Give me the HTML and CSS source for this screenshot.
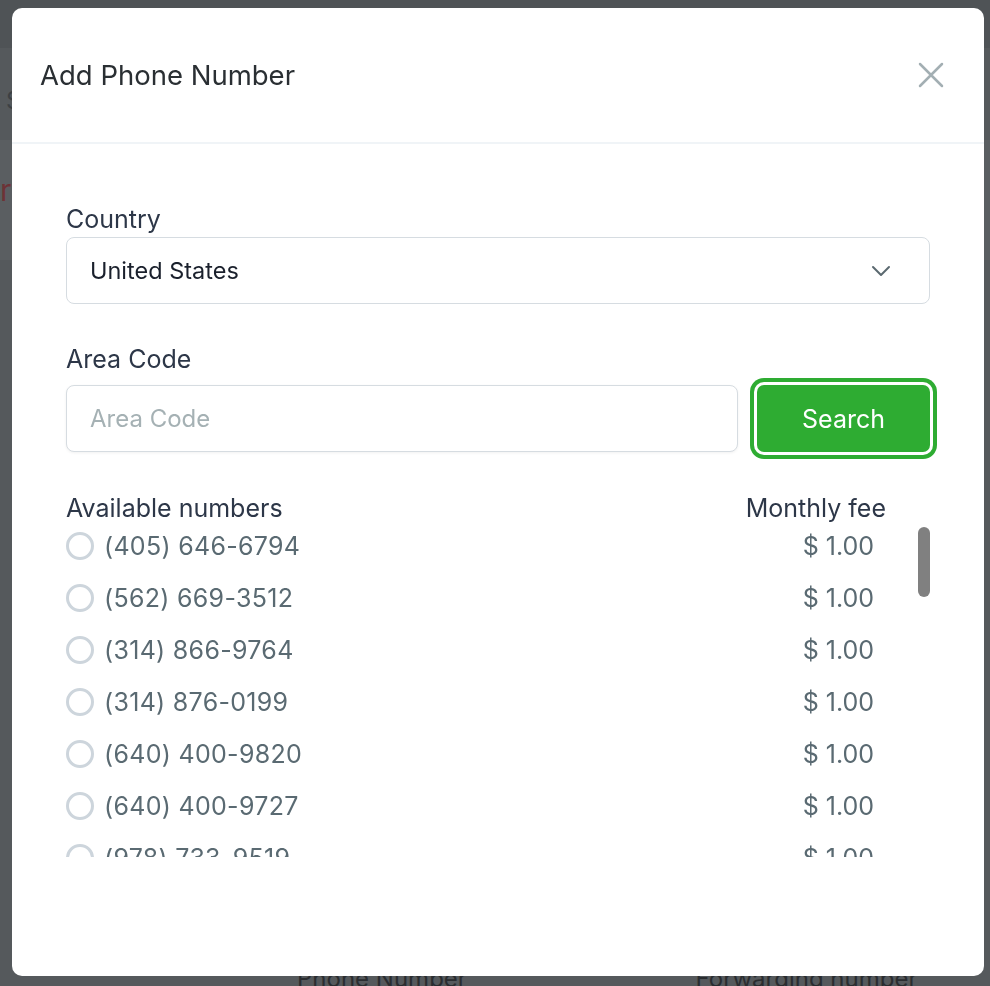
FILE: index.html
```html
<!DOCTYPE html>
<html lang="en">
<head>
	<meta charset="UTF-8">
	<title>Add Phone Number</title>
	<link rel="stylesheet" href="styles.css">
</head>
<body>
	<section class="page">
		<div class="page_top"></div>
		<div class="page_head"><span class="page_s">S</span></div>
		<div class="page_alert"><span class="page_r">r</span></div>
		<div class="page_main"></div>
		<div class="page_cols">
			<span class="col_phone">Phone Number</span>
			<span class="col_fwd">Forwarding number</span>
		</div>
	</section>

	<section class="modal">
		<header class="modal_head">
			<h1>Add Phone Number</h1>
			<button class="close" aria-label="Close">
				<svg width="26" height="26" viewBox="0 0 26 26"><path d="M2 2L24 24M24 2L2 24" stroke="#a3afb3" stroke-width="2.5" stroke-linecap="round"/></svg>
			</button>
		</header>
		<div class="modal_body">
			<label class="label label_country">Country</label>
			<div class="select">
				<span>United States</span>
				<svg width="20" height="12" viewBox="0 0 20 12"><path d="M2 2L10 10L18 2" fill="none" stroke="#5b6970" stroke-width="2" stroke-linecap="round" stroke-linejoin="round"/></svg>
			</div>

			<label class="label label_area">Area Code</label>
			<div class="search_row">
				<input class="area_input" type="text" placeholder="Area Code">
				<button class="search_btn">Search</button>
			</div>

			<div class="list_head">
				<span>Available numbers</span>
				<span>Monthly fee</span>
			</div>
			<div class="list_wrap">
				<ul class="list">
					<li><span class="radio"></span><span class="num">(405) 646-6794</span><span class="fee">$ 1.00</span></li>
					<li><span class="radio"></span><span class="num">(562) 669-3512</span><span class="fee">$ 1.00</span></li>
					<li><span class="radio"></span><span class="num">(314) 866-9764</span><span class="fee">$ 1.00</span></li>
					<li><span class="radio"></span><span class="num">(314) 876-0199</span><span class="fee">$ 1.00</span></li>
					<li><span class="radio"></span><span class="num">(640) 400-9820</span><span class="fee">$ 1.00</span></li>
					<li><span class="radio"></span><span class="num">(640) 400-9727</span><span class="fee">$ 1.00</span></li>
					<li><span class="radio"></span><span class="num">(978) 733-9519</span><span class="fee">$ 1.00</span></li>
					<li><span class="radio"></span><span class="num">(978) 733-9520</span><span class="fee">$ 1.00</span></li>
				</ul>
				<div class="thumb"></div>
			</div>
		</div>
	</section>
</body>
</html>
```

FILE: styles.css
```css
*{margin:0;padding:0;box-sizing:border-box}
li{list-style: none}
body{
	width: 990px;
	height: 986px;
	overflow: hidden;
	background: #54595c;
	font-family: Inter, "Liberation Sans", sans-serif;
}
.page{
	display: flex;
	flex-direction: column;
	height: 986px;
}
.page_top{
	height: 48px;
	background: #4f5356;
}
.page_head{
	height: 92px;
	background: #55595c;
	padding: 38px 0 0 6px;
	font-size: 24px;
	color: #3d4144;
}
.page_alert{
	height: 120px;
	background: #5a5e61;
	padding: 32px 0 0 0;
	font-size: 30px;
	color: #6e3236;
}
.page_main{
	flex: 1;
	background: #55595c;
}
.page_cols{
	height: 20px;
	background: #55595c;
	font-size: 24px;
	line-height: 22px;
	color: #2a2d30;
	overflow: hidden;
	padding-top: 2px;
	white-space: nowrap;
}
.col_phone{margin-left: 297px}
.col_fwd{margin-left: 222px}

.modal{
	position: fixed;
	left: 12px;
	top: 8px;
	width: 972px;
	height: 968px;
	background: #fff;
	border-radius: 10px;
	overflow: hidden;
}
.modal_head{
	display: flex;
	align-items: center;
	justify-content: space-between;
	height: 136px;
	padding: 0 40px 0 28px;
	border-bottom: 2px solid #f0f4f7;
}
.modal_head h1{
	font-weight: 400;
	font-size: 27.5px;
	color: #2a2f33;
}
.close{
	border: 0;
	background: none;
	display: flex;
	padding: 0;
}
.modal_body{
	padding: 61px 54px 0 54px;
}
.label{
	display: block;
	font-size: 25px;
	line-height: 28px;
	color: #2d3748;
}
.label_country{margin-bottom: 4px}
.label_area{margin-top: 41px;margin-bottom: 12px}
.select{
	display: flex;
	align-items: center;
	justify-content: space-between;
	height: 67px;
	padding: 0 38px 0 23px;
	border: 1px solid #d6dce1;
	border-radius: 8px;
	font-size: 23.5px;
	color: #1a202c;
}
.search_row{
	display: flex;
	gap: 19px;
}
.area_input{
	flex: 1;
	height: 67px;
	border: 1px solid #d6dce1;
	border-radius: 8px;
	padding: 0 23px;
	font-family: inherit;
	font-size: 24px;
	color: #1a202c;
	box-shadow: 0 1px 3px rgba(0,0,0,0.06);
	outline: none;
}
.area_input::placeholder{color: #a5b1b4}
.search_btn{
	width: 173px;
	height: 67px;
	border: 0;
	border-radius: 7px;
	background: #2eac32;
	color: #fff;
	font-family: inherit;
	font-size: 25px;
	box-shadow: 0 0 0 3px #fff, 0 0 0 7px #2eac32;
}
.list_head{
	display: flex;
	justify-content: space-between;
	margin-top: 44px;
	padding-right: 44px;
	font-size: 25px;
	line-height: 24px;
	color: #2d3748;
}
.list_wrap{
	position: relative;
	height: 337px;
	overflow: hidden;
}
.list li{
	display: flex;
	align-items: center;
	height: 52px;
	padding-right: 56px;
	font-size: 25px;
	letter-spacing: 0.3px;
	color: #5a6a72;
}
.radio{
	width: 28px;
	height: 28px;
	border: 3px solid #cdd5dc;
	border-radius: 50%;
	margin-right: 10px;
}
.num{flex: 1}
.fee{letter-spacing: 0}
.thumb{
	position: absolute;
	right: 0;
	top: 7px;
	width: 12px;
	height: 70px;
	border-radius: 6px;
	background: #808080;
}
```
